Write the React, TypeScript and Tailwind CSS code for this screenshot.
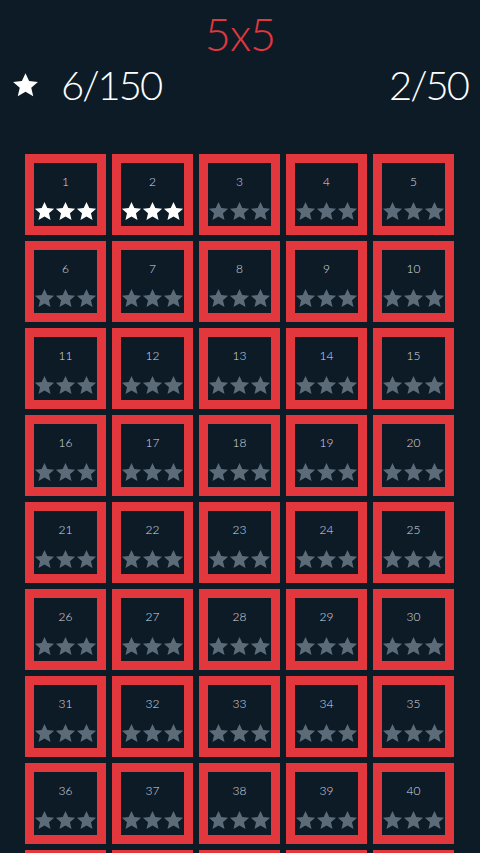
import React from "react";

function Star({ color, size }: { color: string; size: number }) {
  return (
    <svg width={size} height={size} viewBox="0 0 24 24">
      <path
        d="M12 1l3.2 7.1 7.8.7-5.9 5.2 1.8 7.6L12 17.6l-6.9 4 1.8-7.6L1 8.8l7.8-.7z"
        fill={color}
      />
    </svg>
  );
}

function Cell({ n, done, blank }: { n: number; done: boolean; blank?: boolean }) {
  const c = done ? "#ffffff" : "#5c6b78";
  return (
    <div className="w-[81px] h-[81px] border-[9px] border-[#e1373d] flex flex-col items-center">
      {!blank && (
        <>
          <div className="mt-[12px] h-[14px] text-[12px] leading-[14px] text-[#d8dde2] font-light">
            {n}
          </div>
          <div className="mt-[12px] flex">
            <Star color={c} size={21} />
            <Star color={c} size={21} />
            <Star color={c} size={21} />
          </div>
        </>
      )}
    </div>
  );
}

export default function App() {
  const nums = Array.from({ length: 45 }, (_, i) => i + 1);
  return (
    <div
      className="w-[480px] h-[853px] overflow-hidden bg-[#0d1b27] text-white"
      style={{ fontFamily: "Lato, 'Liberation Sans', sans-serif", fontFeatureSettings: '"calt" 0' }}
    >
      <div className="pt-[12px] text-center text-[45px] leading-none font-light tracking-[-1px] text-[#e1373d]">
        5x5
      </div>
      <div className="mt-[8px] flex items-center justify-between pl-[12px] pr-[12px]">
        <div className="flex items-center gap-[22px]">
          <Star color="#ffffff" size={27} />
          <span className="text-[40px] leading-none font-light tracking-[-2px]">6/150</span>
        </div>
        <span className="text-[40px] leading-none font-light tracking-[-2px]">2/50</span>
      </div>
      <div className="mt-[49px] pl-[25px] grid grid-cols-[repeat(5,81px)] gap-[6px]">
        {nums.map((n) => (
          <Cell key={n} n={n} done={n <= 2} blank={n > 40} />
        ))}
      </div>
    </div>
  );
}
